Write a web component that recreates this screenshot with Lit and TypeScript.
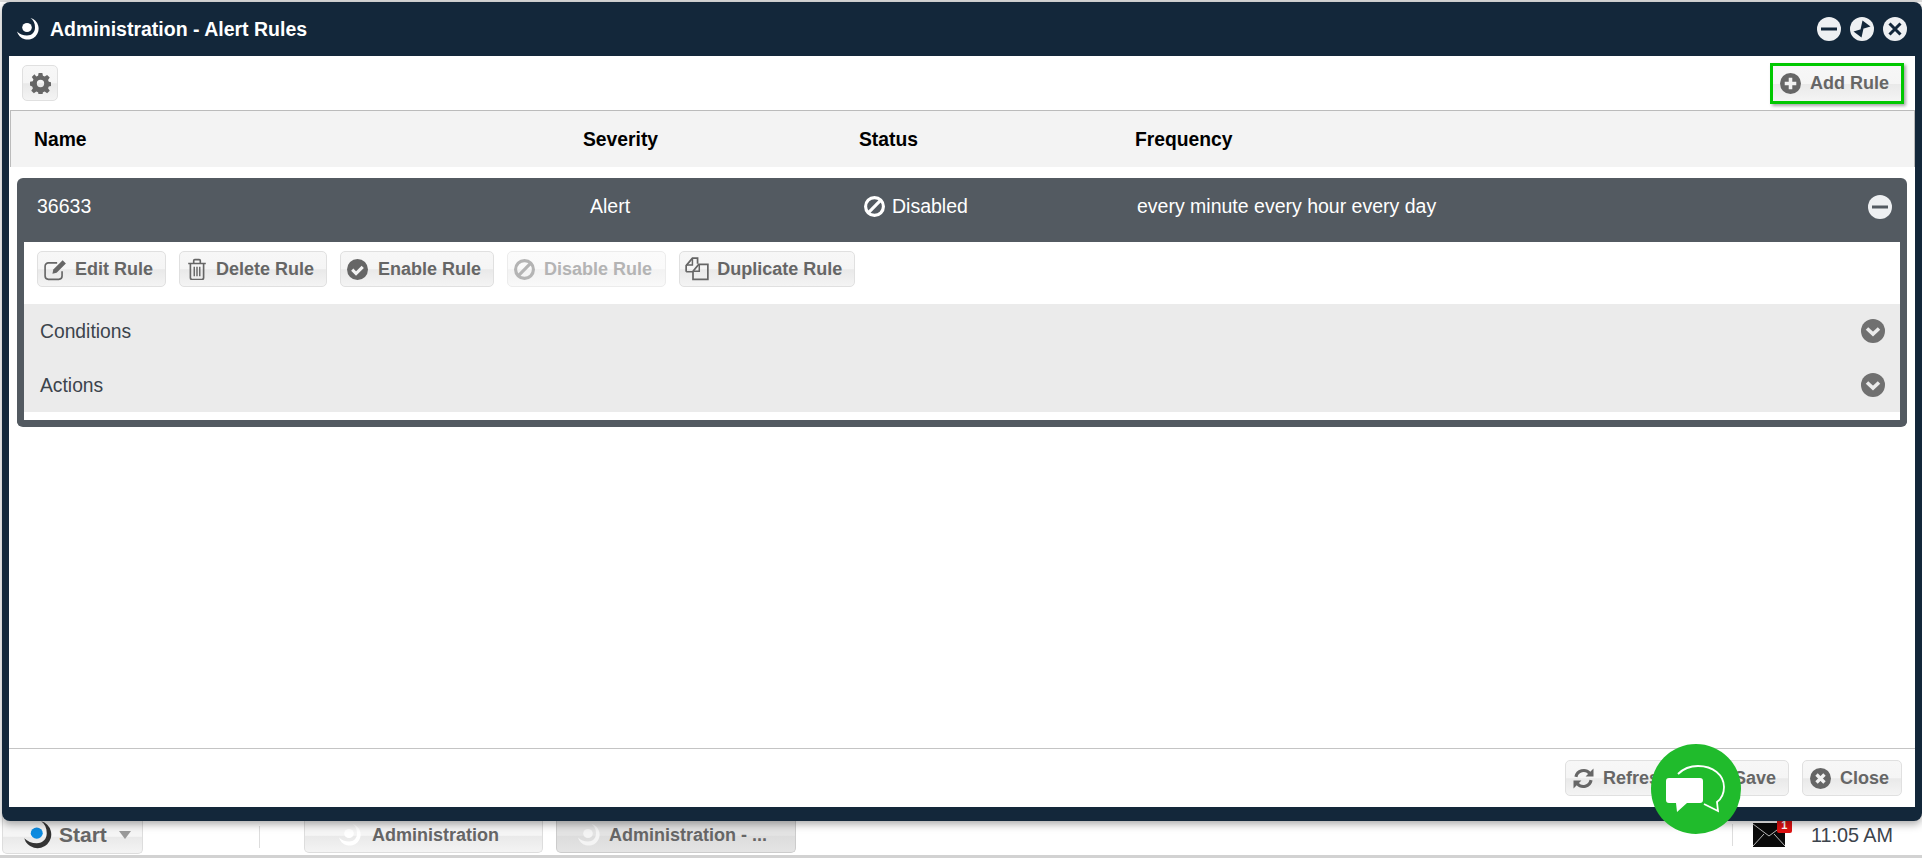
import { LitElement, html, css, svg } from "lit";
import { customElement } from "lit/decorators.js";

const logo = (ring: string, dot: string, w = 24) => html`<svg width=${w} height=${w} viewBox="0 0 24 24" class="logo">
  <path d="M14.500 1A11 11 0 1 1 1 14.500C3.500 17 7 18.500 11 18.500C16 18.500 19 15 19 10.500C19 6.500 17.500 3 14.500 1Z" fill=${ring}></path>
  <ellipse cx="11" cy="10.500" rx="4.800" ry="4.500" fill=${dot}></ellipse>
</svg>`;

const I = (p: unknown, size = 20, box = 20) => html`<svg class="ic" width=${size} height=${size} viewBox="0 0 ${box} ${box}">${p}</svg>`;

const plusCircle = I(svg`<circle cx="10" cy="10" r="10" fill="currentColor"></circle><path d="M10 4.500v11M4.500 10h11" stroke="#f2f2f2" stroke-width="3.400"></path>`, 21);
const checkCircle = I(svg`<circle cx="10" cy="10" r="10" fill="currentColor"></circle><path d="M5 10.200l3.600 3.600L15 7.400" fill="none" stroke="#f2f2f2" stroke-width="3"></path>`, 21);
const closeCircle = I(svg`<circle cx="10" cy="10" r="10" fill="currentColor"></circle><path d="M6.200 6.200l7.600 7.600M13.800 6.200l-7.600 7.600" stroke="#f2f2f2" stroke-width="3.200"></path>`, 21);
const ban = I(svg`<circle cx="10" cy="10" r="8.500" fill="none" stroke="currentColor" stroke-width="3"></circle><path d="M4.500 15.500L15.500 4.500" stroke="currentColor" stroke-width="3"></path>`, 21);
const gear = I(svg`<path fill="currentColor" fill-rule="evenodd" d="M8.200 0h3.600l.5 2.700 1.700.7 2.300-1.600 2.500 2.500-1.600 2.300.7 1.700 2.600.5v3.500l-2.600.5-.7 1.700 1.600 2.300-2.500 2.500-2.300-1.600-1.700.7-.5 2.600H8.200l-.5-2.600-1.700-.7-2.300 1.600-2.500-2.500 1.600-2.300-.7-1.700L0 11.800V8.300l2.600-.5.700-1.700-1.600-2.300 2.500-2.500L6 3.400l1.700-.7zM10 6.500a3.500 3.500 0 1 0 0 7 3.500 3.500 0 0 0 0-7z"></path>`, 21);
const edit = I(svg`<path d="M16.500 12v4.500a3 3 0 0 1-3 3H4a3 3 0 0 1-3-3V7.500a3 3 0 0 1 3-3h8" fill="none" stroke="currentColor" stroke-width="1.500"></path><path d="M8.500 10.500L17 2l3 3-8.500 8.500-3.800.8z" fill="currentColor"></path>`, 23, 21);
const trash = I(svg`<path d="M2 5h16M7 5V2.500a1 1 0 0 1 1-1h4a1 1 0 0 1 1 1V5M4 5v13a1.500 1.500 0 0 0 1.500 1.500h9A1.500 1.500 0 0 0 16 18V5" fill="none" stroke="currentColor" stroke-width="1.500"></path><path d="M7.500 8v8.500M10 8v8.500M12.500 8v8.500" stroke="currentColor" stroke-width="1.300"></path>`, 22);
const copy = I(svg`<path d="M1 13V7.500L6.500 1H11v5" fill="none" stroke="currentColor" stroke-width="1.500"></path><path d="M7 19.500V12.500L12 6.500h8v13z" fill="none" stroke="currentColor" stroke-width="1.500"></path><path d="M1 13h6M6.500 1v6H1M12.500 6.500V12.500H7" fill="none" stroke="currentColor" stroke-width="1.300"></path>`, 24, 21);
const refresh = I(svg`<path d="M2.800 8.500A7.500 7.500 0 0 1 15.800 5" fill="none" stroke="currentColor" stroke-width="3"></path><path d="M19.500 .5v7.500h-7.500z" fill="currentColor"></path><path d="M17.200 11.500A7.500 7.500 0 0 1 4.200 15" fill="none" stroke="currentColor" stroke-width="3"></path><path d="M.5 19.500V12h7.500z" fill="currentColor"></path>`, 21);
const chevCircle = html`<svg width="24" height="24" viewBox="0 0 24 24"><circle cx="12" cy="12" r="12" fill="#707070"></circle><path d="M6 9.500l6 5.500 6-5.500" fill="none" stroke="#ebebeb" stroke-width="3.600"></path></svg>`;
const minusW = (bar: string) => html`<svg width="24" height="24" viewBox="0 0 24 24"><circle cx="12" cy="12" r="12" fill="#eef0f2"></circle><path d="M4 12h16" stroke=${bar} stroke-width="3"></path></svg>`;
const winMax = html`<svg width="24" height="24" viewBox="0 0 24 24"><circle cx="12" cy="12" r="12" fill="#eef0f2"></circle><path d="M12.500 3.500L20.500 9.500 10.500 12.500zM11.500 20.500L3.500 14.500 13.500 11.500z" fill="#13273a"></path></svg>`;
const winClose = html`<svg width="24" height="24" viewBox="0 0 24 24"><circle cx="12" cy="12" r="12" fill="#eef0f2"></circle><path d="M6.500 6.500l11 11M17.500 6.500l-11 11" stroke="#13273a" stroke-width="3"></path></svg>`;

@customElement("app-root")
export class AppRoot extends LitElement {
  static styles = css`
    :host { display: block; width: 1922px; height: 858px; overflow: hidden; font-family: "Liberation Sans", Arial, sans-serif; color: #333; }
    .desk { position: relative; width: 100%; height: 100%; display: flex; flex-direction: column; background: #fff; border-top: 2px solid #ddd; box-sizing: border-box; }
    .spacer { flex: 1; }
    svg { display: block; flex: none; }

    .btn { display: inline-flex; align-items: center; gap: 8px; height: 36px; box-sizing: border-box; padding: 0 12px 0 6px; border: 1px solid #e0e0e0; border-radius: 5px;
      font-size: 18px; font-weight: 700; color: #666; white-space: nowrap;
      background: linear-gradient(#f7f7f7 0, #f5f5f5 50%, #e9e9e9 52%, #f4f4f4 100%); }
    .btn.off { color: #b4b4b4; background: linear-gradient(#fbfbfb 0, #fafafa 50%, #f2f2f2 52%, #f9f9f9 100%); border-color: #ececec; gap: 9px; padding-right: 13px; }
    .btn.en { gap: 10px; }
    .btn.dup { gap: 8px; padding-left: 5px; }

    .win { position: absolute; left: 2px; top: 0; width: 1920px; height: 819px; box-sizing: border-box; background: #13273a; border-radius: 8px; padding: 0 7px 14px; display: flex; flex-direction: column; box-shadow: 0 3px 8px rgba(0,0,0,.35); }
    .title { height: 54px; flex: none; display: flex; align-items: center; gap: 10px; padding-left: 8px; color: #fff; font-size: 19.500px; font-weight: 700; margin-left: -1px; }
    .title .ctl { margin-left: auto; display: flex; gap: 9px; margin-right: 8px; }
    .body { flex: 1; background: #fff; display: flex; flex-direction: column; min-height: 0; }

    .toolbar { height: 54px; flex: none; display: flex; align-items: center; justify-content: space-between; padding: 0 11px 0 13px; box-sizing: border-box; }
    .gear { width: 36px; padding: 0; justify-content: center; color: #666; }
    .add { height: 41px; border: 3px solid #00c800; border-radius: 0; padding: 0 12px 0 7px; gap: 9px; box-shadow: 2px 2px 3px rgba(0,0,0,.35); }
    .cols { display: grid; grid-template-columns: 549px 276px 276px 1fr; align-items: center; }
    .head { height: 57px; flex: none; margin-left: 1px; box-sizing: border-box; padding: 1px 0 0 23px; background: #f3f3f3; border: 1px solid #bbb; border-width: 1px 1px 0 1px; font-size: 19.300px; font-weight: 700; color: #000; }

    .rule { margin: 11px 8px 0; height: 249px; flex: none; box-sizing: border-box; border: 7px solid #535a61; border-top: 0; border-radius: 6px; display: flex; flex-direction: column; background: #fff; }
    .rule-head { height: 64px; flex: none; background: #535a61; color: #fff; font-size: 19.500px; padding: 0 0 7px 13px; box-sizing: border-box; grid-template-columns: 553px 270px 277px 1fr auto; }
    .rule-head .st { display: flex; align-items: center; gap: 7px; margin-left: 4px; }
    .rule-head .st svg { color: #fff; }
    .rule-head .minus { margin-right: 8px; }
    .actions { height: 62px; flex: none; display: flex; align-items: center; gap: 13px; padding: 0 0 8px 13px; box-sizing: border-box; }
    .sections { height: 108px; flex: none; background: #ebebeb; display: flex; flex-direction: column; }
    .sec { flex: 1; display: flex; align-items: center; justify-content: space-between; padding: 0 15px 0 16px; font-size: 19.300px; color: #3c444c; }
    .sec span { position: relative; top: 1px; }

    .foot { margin-top: auto; height: 59px; flex: none; border-top: 1px solid #c4c4c4; display: flex; align-items: center; justify-content: flex-end; gap: 13px; padding: 0 13px 0 0; box-sizing: border-box; }
    .foot .btn { gap: 9px; padding-left: 7px; }

    .chat { position: absolute; left: 1651px; top: 742px; width: 90px; height: 90px; border-radius: 50%; background: #20bb2c; display: flex; align-items: center; justify-content: center; }

    .task { height: 40px; flex: none; display: flex; align-items: flex-end; position: relative; }
    .task .tb { height: 38px; margin-bottom: 2px; padding-top: 3px; box-sizing: border-box; display: flex; align-items: center; border: 1px solid #ddd; border-top: 0; border-radius: 0 0 5px 5px; font-size: 18px; font-weight: 700; color: #666; background: linear-gradient(#f5f5f5 0, #f5f5f5 55%, #e9e9e9 57%, #f4f4f4 100%); }
    .task .start { margin-left: 2px; width: 141px; gap: 6px; padding-left: 20px; font-size: 21px; margin-bottom: 1px; padding-top: 0; }
    .caret { width: 0; height: 0; border: 6px solid transparent; border-top: 8px solid #999; border-bottom: 0; margin-left: 6px; }
    .sep { width: 1px; height: 22px; background: #ddd; margin: 0 0 7px 0; }
    .sep.a { margin-left: 116px; }
    .task .adm { margin-left: 44px; width: 239px; gap: 10px; padding-left: 33px; }
    .task .adm2 { margin-left: 13px; width: 240px; gap: 8px; padding-left: 20px; background: linear-gradient(#e3e3e3 0, #e3e3e3 55%, #dcdcdc 57%, #e4e4e4 100%); border-color: #ccc; }
    .right { margin-left: auto; display: flex; align-items: center; height: 40px; box-sizing: border-box; }
    .right .sep { margin: 0; }
    .mail { position: relative; margin-left: 20px; width: 32px; height: 24px; }
    .badge { position: absolute; right: -7px; top: -4px; width: 15px; height: 14px; background: #d11; color: #fff; border-radius: 2px; font-size: 11px; font-weight: 700; line-height: 13px; text-align: center; }
    .time { margin-left: 26px; margin-right: 29px; font-size: 19.800px; color: #3c444c; }
    .strip { height: 3px; flex: none; background: #d2d2d2; }
  `;

  render() {
    return html`<div class="desk">
      <div class="spacer"></div>
      <div class="task">
        <div class="tb start">${logo("#333", "#0d8be0", 30)}<span>Start</span><i class="caret"></i></div>
        <div class="sep a"></div>
        <div class="tb adm">${logo("#fff", "#fff", 24)}<span>Administration</span></div>
        <div class="tb adm2">${logo("#f4f4f4", "#f4f4f4", 24)}<span>Administration - ...</span></div>
        <div class="right">
          <div class="sep"></div>
          <div class="mail">
            <svg width="32" height="24" viewBox="0 0 32 24"><rect width="32" height="24" fill="#0a0a0a"></rect><path d="M0 1l16 12L32 1M0 23l11-12M32 23L21 11" fill="none" stroke="#bbb" stroke-width="1"></path></svg>
            <div class="badge">1</div>
          </div>
          <div class="time">11:05 AM</div>
        </div>
      </div>
      <div class="strip"></div>

      <div class="win">
        <div class="title">${logo("#fff", "#fff", 24)}<span>Administration - Alert Rules</span>
          <div class="ctl">${minusW("#13273a")}${winMax}${winClose}</div>
        </div>
        <div class="body">
          <div class="toolbar">
            <div class="btn gear">${gear}</div>
            <div class="btn add">${plusCircle}<span>Add Rule</span></div>
          </div>
          <div class="head cols"><span>Name</span><span>Severity</span><span>Status</span><span>Frequency</span></div>
          <div class="rule">
            <div class="rule-head cols">
              <span>36633</span><span>Alert</span>
              <span class="st">${ban}<span>Disabled</span></span>
              <span>every minute every hour every day</span>
              <span class="minus">${minusW("#535a61")}</span>
            </div>
            <div class="actions">
              <div class="btn">${edit}<span>Edit Rule</span></div>
              <div class="btn">${trash}<span>Delete Rule</span></div>
              <div class="btn en">${checkCircle}<span>Enable Rule</span></div>
              <div class="btn off">${ban}<span>Disable Rule</span></div>
              <div class="btn dup">${copy}<span>Duplicate Rule</span></div>
            </div>
            <div class="sections">
              <div class="sec"><span>Conditions</span>${chevCircle}</div>
              <div class="sec"><span>Actions</span>${chevCircle}</div>
            </div>
          </div>
          <div class="foot">
            <div class="btn">${refresh}<span>Refresh</span></div>
            <div class="btn">${plusCircle}<span>Save</span></div>
            <div class="btn">${closeCircle}<span>Close</span></div>
          </div>
        </div>
      </div>

      <div class="chat">
        <svg width="60" height="50" viewBox="0 0 60 50">
          <path d="M12 10C18 4 26 2 32 2C47 2 58 11 58 23C58 30 55 35 51 38L52 47L38 40" fill="none" stroke="#fff" stroke-width="1.800"></path>
          <path d="M3 14H34a3 3 0 0 1 3 3V36a3 3 0 0 1-3 3H21L11 48L10 39H3a3 3 0 0 1-3-3V17a3 3 0 0 1 3-3Z" fill="#fff"></path>
        </svg>
      </div>
    </div>`;
  }
}
